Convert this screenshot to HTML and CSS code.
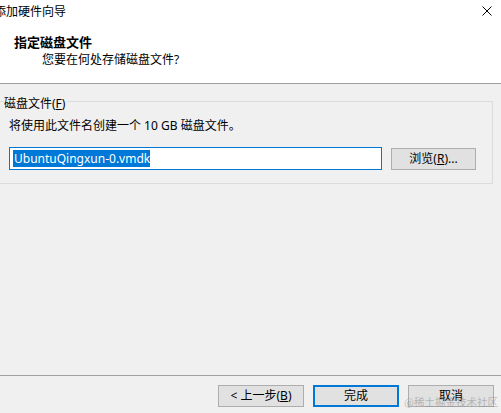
FILE: index.html
```html
<!DOCTYPE html>
<html lang="zh-CN">
<head>
<meta charset="utf-8">
<link rel="stylesheet" href="styles.css">
</head>
<body>
<div class="window">
  <div class="top">
    <div class="titlebar">
      <span class="title">添加硬件向导</span>
      <svg class="close" width="10" height="10" viewBox="0 0 10 10"><path d="M0.5 0.5L9.5 9.5M9.5 0.5L0.5 9.5" stroke="#000" stroke-width="1" fill="none"/></svg>
    </div>
    <div class="heading">指定磁盘文件</div>
    <div class="sub">您要在何处存储磁盘文件?</div>
  </div>
  <div class="main">
    <div class="group">
      <span class="legend">磁盘文件(<u>F</u>)</span>
      <div class="desc">将使用此文件名创建一个 10 GB 磁盘文件。</div>
      <div class="row">
        <div class="input"><span class="sel">UbuntuQingxun-0.vmdk</span></div>
        <button class="btn browse">浏览(<u>R</u>)...</button>
      </div>
    </div>
  </div>
  <div class="footer">
    <button class="btn">&lt; 上一步(<u>B</u>)</button>
    <button class="btn default">完成</button>
    <button class="btn">取消</button>
    <span class="watermark">@稀土掘金技术社区</span>
  </div>
</div>
</body>
</html>
```
FILE: styles.css
```css
* { box-sizing: border-box; }
html, body { margin: 0; padding: 0; }
body {
  font-family: "Noto Sans", "Noto Sans CJK SC", sans-serif;
  font-size: 12px;
  color: #000;
  background: #f0f0f0;
  overflow: hidden;
}
.window {
  width: 501px;
  height: 413px;
  display: flex;
  flex-direction: column;
  position: relative;
}
.top {
  height: 84px;
  background: #fff;
  border-bottom: 1px solid #a0a0a0;
}
.titlebar {
  height: 24px;
  display: flex;
  align-items: center;
  justify-content: space-between;
  padding-right: 9px;
}
.title {
  margin-left: -6px;
  line-height: 16px;
  font-size: 12px;
}
.close { display: block; margin-top: -2px; }
.heading {
  margin-top: 10px;
  padding-left: 14px;
  font-weight: bold;
  font-size: 13px;
  line-height: 16px;
}
.sub {
  margin-top: 2px;
  padding-left: 42px;
  line-height: 16px;
}
.main {
  flex: 1;
  padding-top: 17px;
}
.group {
  position: relative;
  margin-left: -3px;
  width: 496px;
  border: 1px solid #dcdcdc;
  padding: 16px 0 13px 11px;
}
.legend {
  position: absolute;
  top: -5px;
  left: 6px;
  background: #f0f0f0;
  padding: 0 2px 0 0;
  line-height: 14px;
}
.desc {
  line-height: 16px;
}
.row {
  margin-top: 13px;
  display: flex;
  align-items: center;
  gap: 9px;
}
.input {
  width: 373px;
  height: 23px;
  background: #fff;
  border: 1px solid #0078d7;
  padding: 2px 3px;
  display: flex;
  align-items: center;
}
.sel {
  background: #0078d7;
  color: #fff;
  line-height: 17px;
  height: 17px;
  padding: 0 0 0 1px;
}
.btn {
  font-family: "Noto Sans", "Noto Sans CJK SC", sans-serif;
  font-size: 12px;
  color: #000;
  background: #e1e1e1;
  border: 1px solid #adadad;
  height: 22px;
  width: 86px;
  padding: 0;
  line-height: 18px;
}
.browse { width: 85px; height: 22px; }
.footer {
  height: 38px;
  border-top: 1px solid #a0a0a0;
  display: flex;
  justify-content: flex-end;
  align-items: flex-start;
  gap: 9px;
  padding: 9px 7px 0 0;
  position: relative;
}
.default {
  border: 2px solid #0078d7;
}
.watermark {
  position: absolute;
  right: 3px;
  bottom: 4px;
  font-size: 10.5px;
  color: rgba(140, 140, 140, 0.55);
  font-family: "Noto Sans CJK SC", serif;
  pointer-events: none;
}
```
